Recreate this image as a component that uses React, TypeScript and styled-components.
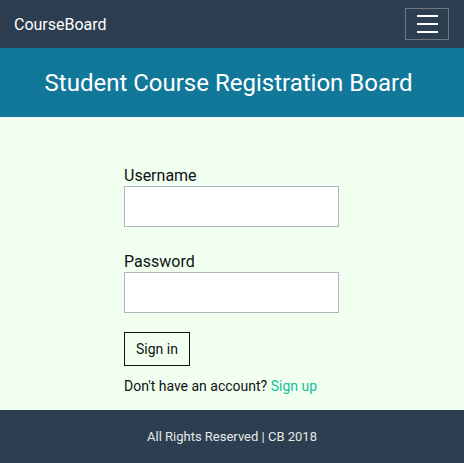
import styled, { createGlobalStyle } from 'styled-components';

const GlobalStyle = createGlobalStyle`
  * {
    box-sizing: border-box;
  }
  body {
    margin: 0;
    font-family: Roboto, 'Liberation Sans', Arial, sans-serif;
    background: #f0fff0;
  }
`;

const Page = styled.div`
  display: flex;
  flex-direction: column;
  min-height: 463px;
`;

const Navbar = styled.nav`
  display: flex;
  align-items: center;
  justify-content: space-between;
  height: 48px;
  padding: 0 15px 0 14px;
  background-color: #2c3e50;
`;

const Brand = styled.a`
  font-size: 16px;
  color: #ffffff;
  text-decoration: none;
`;

const Toggler = styled.button`
  display: flex;
  flex-direction: column;
  align-items: center;
  justify-content: center;
  gap: 6px;
  width: 44px;
  height: 32px;
  padding: 0;
  background: transparent;
  border: 1px solid rgba(255, 255, 255, 0.3);
  border-radius: 0;

  span {
    display: block;
    width: 21px;
    height: 2px;
    background-color: #ffffff;
  }
`;

const Hero = styled.header`
  display: flex;
  align-items: center;
  justify-content: center;
  height: 69px;
  padding-right: 7px;
  background-color: #12789a;

  h1 {
    margin: 0;
    font-size: 24px;
    font-weight: 400;
    color: #ffffff;
  }
`;

const Main = styled.main`
  flex: 1;
  display: flex;
  justify-content: center;
  padding: 49px 1px 0 0;
`;

const Form = styled.form`
  display: flex;
  flex-direction: column;
  width: 215px;
`;

const Field = styled.div`
  display: flex;
  flex-direction: column;
  margin-bottom: ${(p: { $gap: number }) => p.$gap}px;

  label {
    font-size: 16px;
    line-height: 20px;
    color: #111111;
  }

  input {
    height: 41px;
    border: 1px solid #b3b3bd;
    background: #ffffff;
    border-radius: 0;
    outline: none;
  }
`;

const SignIn = styled.button`
  align-self: flex-start;
  height: 34px;
  padding: 0 11px;
  font-family: inherit;
  font-size: 14px;
  color: #111111;
  background: transparent;
  border: 1px solid #111111;
  border-radius: 0;
`;

const Hint = styled.p`
  margin: 12px 0 0;
  font-size: 14px;
  color: #111111;

  a {
    color: #1abc9c;
    text-decoration: none;
  }
`;

const Footer = styled.footer`
  display: flex;
  align-items: center;
  justify-content: center;
  height: 53px;
  background-color: #2c3e50;
  font-size: 13px;
  color: #e8e8e8;
`;

export default function App() {
  return (
    <Page>
      <GlobalStyle />
      <Navbar>
        <Brand href="#">CourseBoard</Brand>
        <Toggler type="button" aria-label="Toggle navigation">
          <span />
          <span />
          <span />
        </Toggler>
      </Navbar>
      <Hero>
        <h1>Student Course Registration Board</h1>
      </Hero>
      <Main>
        <Form onSubmit={(e) => e.preventDefault()}>
          <Field $gap={25}>
            <label htmlFor="username">Username</label>
            <input id="username" type="text" />
          </Field>
          <Field $gap={19}>
            <label htmlFor="password">Password</label>
            <input id="password" type="password" />
          </Field>
          <SignIn type="submit">Sign in</SignIn>
          <Hint>
            Don't have an account? <a href="#">Sign up</a>
          </Hint>
        </Form>
      </Main>
      <Footer>All Rights Reserved | CB 2018</Footer>
    </Page>
  );
}
